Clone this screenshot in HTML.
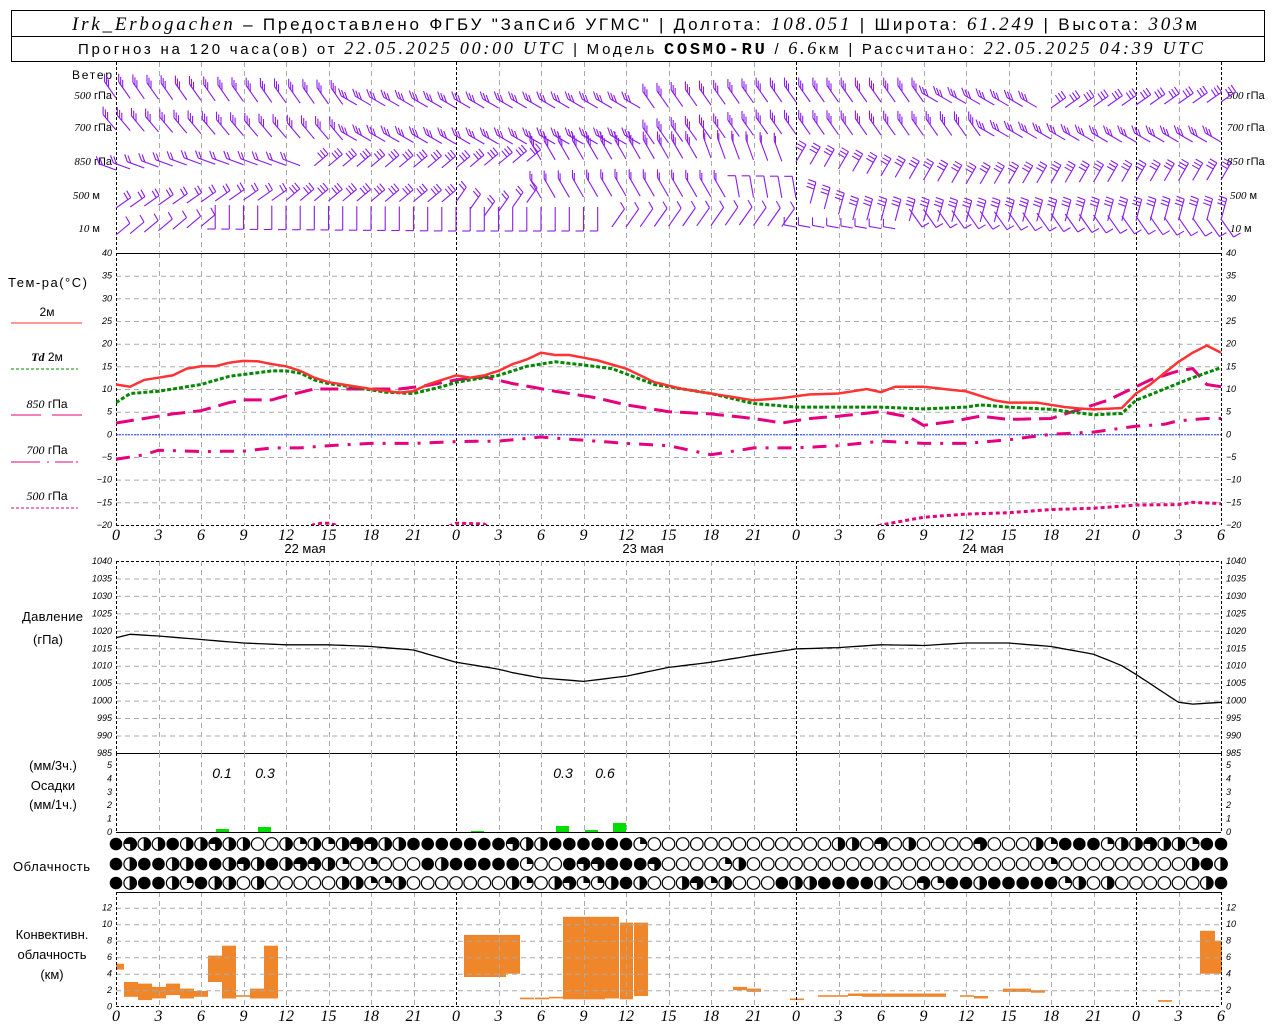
<!DOCTYPE html>
<html><head><meta charset="utf-8">
<style>
html,body{margin:0;padding:0;background:#fff;}
svg{display:block;}
text{font-family:"Liberation Sans",sans-serif;fill:#000;}
.it{font-family:"Liberation Serif",serif;font-style:italic;}
.ax{font-family:"Liberation Sans",sans-serif;font-style:italic;font-size:9px;}
</style></head>
<body>
<svg id="s" width="1280" height="1024" viewBox="0 0 1280 1024" xmlns="http://www.w3.org/2000/svg">
<rect x="0" y="0" width="1280" height="1024" fill="#fff"/>
<rect x="11.5" y="10.5" width="1253" height="51" fill="none" stroke="#000"/>
<line x1="11" y1="36.5" x2="1264" y2="36.5" stroke="#000"/>
<text x="72" y="30" font-size="17" textLength="1125" lengthAdjust="spacing"><tspan class="it" font-size="19">Irk_Erbogachen</tspan> – Предоставлено ФГБУ "ЗапСиб УГМС" | Долгота: <tspan class="it" font-size="19">108.051</tspan> | Широта: <tspan class="it" font-size="19">61.249</tspan> | Высота: <tspan class="it" font-size="19">303</tspan>м</text>
<text x="78" y="54" font-size="15" textLength="1125" lengthAdjust="spacing">Прогноз на 120 часа(ов) от <tspan class="it" font-size="18">22.05.2025 00:00 UTC</tspan> | Модель <tspan font-family="Liberation Mono" font-weight="bold" font-size="17">COSMO-RU</tspan> / <tspan class="it" font-size="18">6.6</tspan>км | Рассчитано: <tspan class="it" font-size="18">22.05.2025 04:39 UTC</tspan></text>

<g font-size="11">
<text x="72" y="79" font-size="12" textLength="40">Ветер</text>
<text x="112" y="99" text-anchor="end"><tspan class="it">500</tspan> гПа</text>
<text x="112" y="131" text-anchor="end"><tspan class="it">700</tspan> гПа</text>
<text x="112" y="165" text-anchor="end"><tspan class="it">850</tspan> гПа</text>
<text x="100" y="199" text-anchor="end"><tspan class="it">500</tspan> м</text>
<text x="100" y="232" text-anchor="end"><tspan class="it">10</tspan>   м</text>
<text x="1227" y="99"><tspan class="it">500</tspan> гПа</text>
<text x="1227" y="131"><tspan class="it">700</tspan> гПа</text>
<text x="1227" y="165"><tspan class="it">850</tspan> гПа</text>
<text x="1230" y="199"><tspan class="it">500</tspan> м</text>
<text x="1230" y="232"><tspan class="it">10</tspan>   м</text>

<text x="8" y="287" font-size="13" textLength="79">Тем-ра(°C)</text>
<text x="47" y="316" text-anchor="middle" font-size="12">2м</text>
<line x1="11" y1="323" x2="82" y2="323" stroke="#f33"/>
<text x="47" y="361" text-anchor="middle" font-size="12"><tspan class="it" font-weight="bold">Td</tspan>  2м</text>
<line x1="11" y1="369" x2="78" y2="369" stroke="#080" stroke-dasharray="3,2"/>
<text x="47" y="408" text-anchor="middle" font-size="12"><tspan class="it">850</tspan> гПа</text>
<line x1="11" y1="415" x2="41" y2="415" stroke="#e6007e"/><line x1="52" y1="415" x2="82" y2="415" stroke="#e6007e"/>
<text x="47" y="454" text-anchor="middle" font-size="12"><tspan class="it">700</tspan> гПа</text>
<line x1="11" y1="462" x2="40" y2="462" stroke="#e6007e"/><line x1="47" y1="462" x2="49" y2="462" stroke="#e6007e"/><line x1="55" y1="462" x2="73" y2="462" stroke="#e6007e"/><line x1="76" y1="462" x2="78" y2="462" stroke="#e6007e"/>
<text x="47" y="500" text-anchor="middle" font-size="12"><tspan class="it">500</tspan> гПа</text>
<line x1="11" y1="508" x2="78" y2="508" stroke="#e6007e" stroke-dasharray="3,2"/>

<text x="22" y="621" font-size="13" textLength="61">Давление</text>
<text x="33" y="644" font-size="13">(гПа)</text>

<text x="53" y="770" text-anchor="middle" font-size="13">(мм/3ч.)</text>
<text x="53" y="790" text-anchor="middle" font-size="13">Осадки</text>
<text x="53" y="809" text-anchor="middle" font-size="13">(мм/1ч.)</text>
<text x="13" y="871" font-size="13" textLength="77">Облачность</text>
<text x="52" y="939" text-anchor="middle" font-size="13">Конвективн.</text>
<text x="52" y="959" text-anchor="middle" font-size="13">облачность</text>
<text x="52" y="979" text-anchor="middle" font-size="13">(км)</text>

<g class="it" font-size="14">
<text x="222" y="778" text-anchor="middle">0.1</text>
<text x="265" y="778" text-anchor="middle">0.3</text>
<text x="563" y="778" text-anchor="middle">0.3</text>
<text x="605" y="778" text-anchor="middle">0.6</text>
</g>
<text x="305" y="553" text-anchor="middle" font-size="13">22 мая</text>
<text x="643" y="553" text-anchor="middle" font-size="13">23 мая</text>
<text x="983" y="553" text-anchor="middle" font-size="13">24 мая</text>
</g>
<g id="dyn"></g>
</svg>
<script>
(function(){
var out=[];
function X(h){return 116+h*14.1667;}
function L(x1,y1,x2,y2,st){out.push('<line x1="'+x1.toFixed(1)+'" y1="'+y1.toFixed(1)+'" x2="'+x2.toFixed(1)+'" y2="'+y2.toFixed(1)+'" '+st+'/>');}
function T(x,y,s,a,cls,fs){out.push('<text x="'+x+'" y="'+y+'" text-anchor="'+(a||'start')+'" class="'+(cls||'ax')+'"'+(fs?' font-size="'+fs+'"':'')+'>'+s+'</text>');}
var G='stroke="#aaa" stroke-dasharray="5,4" stroke-width="1"';
var B='stroke="#000" stroke-dasharray="3,2" stroke-width="1"';
function vgrid(y1,y2){for(var h=0;h<=78;h+=3){var x=Math.round(X(h))+0.5;L(x,y1,x,y2,(h%24==0||h==78)?B:G);}}
function interp(pts,h){for(var i=0;i<pts.length-1;i++){if(h>=pts[i][0]&&h<=pts[i+1][0]){var t=(h-pts[i][0])/(pts[i+1][0]-pts[i][0]);return pts[i][1]+t*(pts[i+1][1]-pts[i][1]);}}return pts[pts.length-1][1];}
function poly(pts,fy,st){var s='';for(var h=0;h<=78;h+=0.5){s+=X(h).toFixed(1)+','+fy(interp(pts,h)).toFixed(1)+' ';}out.push('<polyline fill="none" points="'+s+'" '+st+'/>');}

vgrid(62,252);
function TY(t){return 253+(40-t)*4.533;}
for(var t=35;t>=-15;t-=5){L(116,TY(t)+.5,1221,TY(t)+.5,G);}
vgrid(253,525);
L(116,253.5,1221,253.5,'stroke="#000"');
L(116,525.5,1221,525.5,B);
for(var t=40;t>=-20;t-=5){T(112,TY(t)+3,t<0?'−'+(-t):t,'end');T(1226,TY(t)+3,t<0?'−'+(-t):t);}
L(116,TY(0)+.5,1221,TY(0)+.5,'stroke="#2040ff" stroke-dasharray="2,1"');
out.push('<defs><clipPath id="ct"><rect x="116" y="253" width="1106" height="272"/></clipPath></defs>');
var p500=[[0,-22],[13,-21],[14.3,-19.6],[15.3,-19.6],[16,-21],[23,-21],[24,-19.6],[26,-19.8],[27,-22],[52,-22],[54,-20],[57,-18.3],[60,-17.6],[63,-17.3],[66,-16.6],[69,-16.3],[72,-15.6],[75,-15.5],[76,-15],[78,-15.3]];
var p700=[[0,-5.5],[2,-4.5],[3,-3.5],[6,-3.8],[9,-3.7],[11,-3],[13,-3],[15,-2.5],[18,-2],[21,-2],[24,-1.6],[27,-1.5],[30,-0.6],[33,-1.3],[36,-2],[39,-2.5],[42,-4.5],[45,-3],[48,-3],[51,-2.5],[54,-1.5],[57,-2],[60,-2],[63,-1.2],[66,0],[69,0.5],[72,1.8],[74,2.2],[75,3],[77,3.5],[78,3.5]];
var p850=[[0,2.5],[2,3.5],[4,4.5],[6,5.2],[8,7],[9,7.6],[11,7.6],[12,8.5],[14,10],[20,10],[22,10.8],[24,12],[26,12.7],[28,11.2],[31,9.5],[34,8],[36,6.5],[39,5],[42,4.5],[45,3.5],[47,2.5],[49,3.5],[51,4],[54,5],[56,3.8],[57,2],[59,2.8],[61,4],[63,3.3],[66,3.5],[68,5.5],[70,7.5],[72,10.5],[73,12],[75,14],[76,14.5],[77,11],[78,10.5]];
var pTd=[[0,7],[1,9],[3,9.5],[6,11],[8,12.8],[11,14],[12,14],[13,13.5],[14,12],[15,11.2],[17,10.3],[19,9.3],[21,9],[23,10.5],[24,11.5],[27,13],[29,15],[31,16],[33,15.3],[35,14.5],[38,11],[42,9],[45,6.8],[48,6],[54,6],[57,5.6],[60,6],[61,6.5],[63,6],[66,5.5],[69,4.3],[71,4.6],[72,7.5],[74,10],[76,12.5],[78,14.7]];
var pT=[[0,11],[1,10.5],[2,12],[3,12.5],[4,13],[5,14.5],[6,15],[7,15],[8,15.8],[9,16.2],[10,16.1],[11,15.5],[12,15],[13,14],[14,12.5],[15,11.5],[16,11],[18,10],[20,9.2],[21,9.5],[22,11],[24,13],[25,12.5],[26,13],[27,14],[28,15.5],[29,16.5],[30,18],[31,17.5],[32,17.5],[34,16.3],[36,14.5],[38,11.5],[40,10],[42,9],[44,8],[45,7.5],[47,8],[49,8.8],[51,9],[52,9.5],[53,10],[54,9.3],[55,10.5],[57,10.5],[59,9.8],[60,9.5],[62,7.5],[63,7],[65,7],[67,6],[68,5.7],[69,5.5],[71,5.8],[72,9],[73,11],[75,16],[76,18],[77,19.6],[78,18]];
out.push('<g clip-path="url(#ct)">');
poly(p500,TY,'stroke="#e6007e" stroke-width="3" stroke-dasharray="4,3"');
poly(p700,TY,'stroke="#e6007e" stroke-width="3" stroke-dasharray="14,9,3,9"');
poly(p850,TY,'stroke="#e6007e" stroke-width="3" stroke-dasharray="18,8"');
poly(pTd,TY,'stroke="#080" stroke-width="3" stroke-dasharray="4,2"');
poly(pT,TY,'stroke="#f33" stroke-width="2.5"');
out.push('</g>');
for(var h=0;h<=78;h+=3){T(X(h),540,h%24,'middle','it',16);}
function PY(p){return 561+(1040-p)*3.49;}
for(var p=1035;p>=990;p-=5){L(116,PY(p)+.5,1221,PY(p)+.5,G);}
L(116,561.5,1221,561.5,B);
vgrid(561,753);
for(var p=1040;p>=985;p-=5){T(112,PY(p)+3,p,'end');T(1226,PY(p)+3,p);}
var pP=[[0,1018],[1,1019],[3,1018.5],[6,1017.5],[9,1016.5],[12,1016],[15,1016],[18,1015.5],[21,1014.5],[24,1011],[27,1009],[28,1008],[30,1006.5],[33,1005.5],[36,1007],[39,1009.5],[42,1011],[45,1013],[48,1014.8],[51,1015.2],[54,1016],[57,1015.8],[60,1016.5],[63,1016.5],[66,1015.5],[69,1013.3],[71,1010],[72,1007.5],[75,999.5],[76,999],[78,999.5]];
poly(pP,PY,'stroke="#000" stroke-width="1.3"');
L(116,753.5,1221,753.5,'stroke="#000"');
vgrid(753,832);
function RY(v){return 832-v*13.4;}
for(var v=0;v<=5;v++){T(112,RY(v)+3,v,'end');T(1226,RY(v)+3,v);}
[[216,829],[258,827],[471,831],[556,826],[585,830],[613,823]].forEach(function(b){out.push('<rect x="'+b[0]+'" y="'+b[1]+'" width="13" height="'+(832-b[1])+'" fill="#0d0"/>');});
L(116,832.5,1221,832.5,'stroke="#000"');
var rows=[
"43224223220021212332"+"244444443224444441000000000000"+"02203020000300021444122322144",
"42442244232423321010"+"004244444100433444300001200000"+"00000000000000001000000000242",
"42442142202000002211"+"200000002102311242002312000422"+"44442003144244444120200000024"];
var ry=[844,864,883];
for(var r=0;r<3;r++){for(var h=0;h<=78;h++){var c=rows[r].charAt(h)||'0',cx=X(h),cy=ry[r],R=6.3;
 if(c=='4'){out.push('<circle cx="'+cx.toFixed(1)+'" cy="'+cy+'" r="'+R+'" fill="#000"/>');continue;}
 out.push('<circle cx="'+cx.toFixed(1)+'" cy="'+cy+'" r="'+R+'" fill="#fff" stroke="#000" stroke-width="1.2"/>');
 if(c=='1'){out.push('<path d="M'+cx+','+cy+' V'+(cy-R)+' A'+R+','+R+' 0 0 1 '+(cx+R)+','+cy+' Z" fill="#000"/>');}
 else if(c=='2'){out.push('<path d="M'+cx+','+(cy-R)+' A'+R+','+R+' 0 0 1 '+cx+','+(cy+R)+' Z" fill="#000"/>');L(cx,cy-R,cx,cy+R,'stroke="#000" stroke-width="1.2"');}
 else if(c=='3'){out.push('<path d="M'+cx+','+cy+' H'+(cx-R)+' A'+R+','+R+' 0 1 1 '+cx+','+(cy+R)+' Z" fill="#000"/>');}
}}
function KY(k){return 1006.7-k*8.25;}
var cb=[[116,4.5,5.2,8],[124,1.2,3,14],[138,0.8,2.8,14],[152,1,2.4,14],[166,1.4,2.8,14],[180,1,2.2,14],[194,1.2,1.9,14],[208,3,6.2,14],[222,1,7.4,14],[236,1.2,1.4,14],[250,1,2.2,14],[264,1,7.4,14],
[464,3.6,8.7,42],[506,4,8.7,14],[520,0.9,1.1,14],[535,0.9,1.1,14],[549,1,1.2,14],[563,0.9,10.9,42],[605,1,10.9,14],[620,0.9,10.2,13],[634,1.3,10.2,14],
[733,2,2.4,14],[747,1.8,2.2,14],[790,0.8,1,14],[818,1.2,1.4,30],[848,1.3,1.6,14],[862,1.2,1.6,84],[960,1.2,1.4,14],[974,1,1.3,14],[1003,1.8,2.2,28],[1031,1.7,2,14],[1158,0.6,0.8,14],[1200,4,9.2,15],[1215,4,8,7]];
cb.forEach(function(b){out.push('<rect x="'+b[0]+'" y="'+KY(b[2]).toFixed(1)+'" width="'+b[3]+'" height="'+((b[2]-b[1])*8.25).toFixed(1)+'" fill="#f0862a"/>');});
for(var k=2;k<=12;k+=2){L(116,KY(k)+.5,1221,KY(k)+.5,G);}
vgrid(892,1007);
L(116,892.5,1221,892.5,'stroke="#000"');
L(116,1006.5,1221,1006.5,B);
for(var k=0;k<=12;k+=2){T(112,KY(k)+3,k,'end');T(1226,KY(k)+3,k);}
for(var h=0;h<=78;h+=3){T(X(h),1021,h%24,'middle','it',16);}
var W='stroke="#8a1be8" stroke-width="1.1" fill="none"';
function seg(tbl,h){for(var i=0;i<tbl.length;i++){if(h<tbl[i][0])return tbl[i];}return tbl[tbl.length-1];}
var R=[
 {y:88,off:[[0,0],[15,6],[24,10],[38,10],[46,4],[58,4],[66,10],[78,4]],s:[[17,-125,-90,3,20],[38,-150,-110,3,18],[58,-125,-90,3,20],[66,-150,-110,3,18],[79,-35,-125,3,18]]},
 {y:120,off:[[0,0],[16,10],[24,14],[38,14],[46,4],[62,6],[70,12],[78,12]],s:[[17,-130,-90,3,20],[38,-150,-110,3,18],[62,-125,-90,3,20],[79,-150,-110,3,18]]},
 {y:160,off:[[0,0],[6,-6],[24,-2],[30,-10],[42,-12],[48,-8],[54,6],[60,14],[78,10]],s:[[14,-160,-110,2,18],[30,-40,-130,3,18],[42,-120,-90,3,22],[48,-110,-90,2,22],[79,-60,-150,3,20]]},
 {y:198,off:[[0,0],[8,-8],[24,-6],[26,8],[30,-10],[36,-12],[48,-10],[52,12],[60,14],[78,12]],s:[[12,-35,-120,2,18],[24,-40,-130,3,18],[30,-55,-130,2,18],[44,-120,-90,2,22],[49,-100,-180,1,22],[79,-75,-160,3,22]]},
 {y:225,off:[[0,0],[7,-10],[24,-8],[36,-8],[44,-10],[48,-8],[56,-6],[78,4]],s:[[7,-40,-120,1,18],[35,90,180,1,24],[48,-55,-120,1,22],[56,-170,-90,1,12],[79,55,-30,1,22]]}
];
R.forEach(function(row){
 for(var h=0;h<=78;h++){
  var sg=seg(row.s,h),x=X(h),y=row.y+interp(row.off,h);
  if(sg[1]<0) y+=10; else y-=10;
  var a=sg[1]*Math.PI/180,fa=sg[2]*Math.PI/180,Lh=sg[4];
  var ex=x+Lh*Math.cos(a),ey=y+Lh*Math.sin(a);
  L(x,y,ex,ey,W);
  for(var i=0;i<sg[3];i++){var bx=ex-i*3.5*Math.cos(a),by=ey-i*3.5*Math.sin(a);L(bx,by,bx+8*Math.cos(fa),by+8*Math.sin(fa),W);}
 }
});
document.getElementById('dyn').innerHTML=out.join('');
})();
</script>
</body></html>
